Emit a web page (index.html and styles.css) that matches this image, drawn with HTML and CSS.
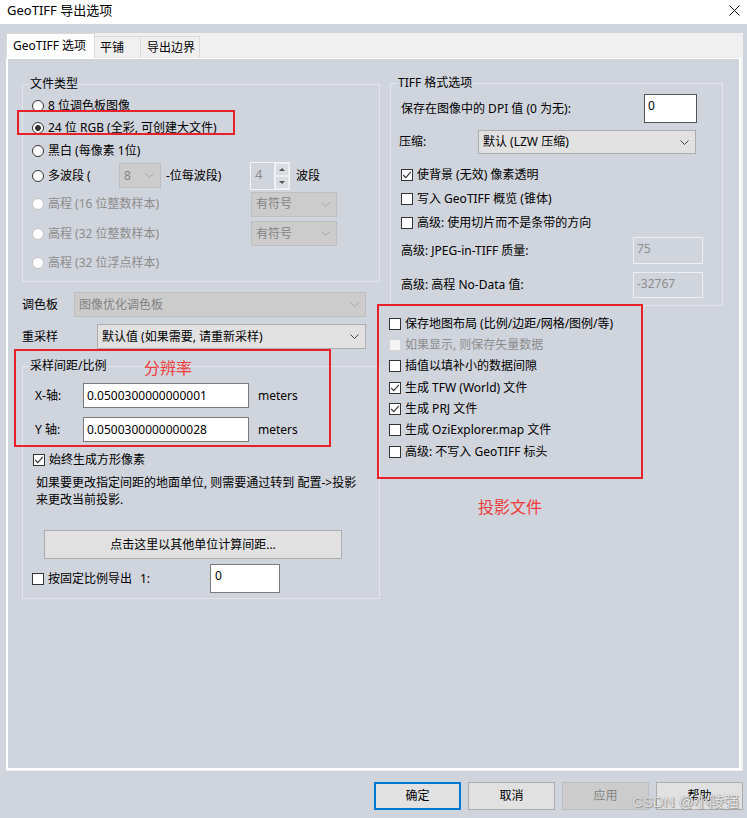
FILE: index.html
```html
<!DOCTYPE html>
<html lang="zh-CN">
  <head>
    <meta charset="UTF-8">
    <title>GeoTIFF 导出选项</title>
    <link rel="stylesheet" href="styles.css">
  </head>
  <body>

    <div class="titlebar">
      <span class="title">GeoTIFF 导出选项</span>
      <svg class="close" width="11" height="11" viewBox="0 0 11 11"><path d="M0.5 0.5L10.5 10.5M10.5 0.5L0.5 10.5" stroke="#111" stroke-width="1"/></svg>
    </div>

    <div class="dialog">
      <div class="tabctl">
        <div class="tabstrip">
          <div class="tab active">GeoTIFF 选项</div>
          <div class="tab t-tile">平铺</div>
          <div class="tab t-bound">导出边界</div>
        </div>

        <div class="page">
          <!-- left column -->
          <div class="col-left">
            <div class="group g-type">
              <div class="group-title">文件类型</div>
              <div class="opt h22"><span class="rb"></span>8 位调色板图像</div>
              <div class="opt h22"><span class="rb on"></span>24 位 RGB (全彩, 可创建大文件)</div>
              <div class="opt h23"><span class="rb"></span>黑白 (每像素 1位)</div>
              <div class="opt h27">
                <span class="opt-lbl w87"><span class="rb"></span>多波段 (</span>
                <div class="combo dis c-bits"><span>8</span><svg class="chev" width="9" height="5" viewBox="0 0 9 5"><path d="M0.5 0.5L4.5 4.5L8.5 0.5" fill="none" stroke="currentColor"/></svg></div>
                <span class="mb-text">-位每波段)</span>
                <div class="spin">
                  <div class="spin-edit">4</div>
                  <div class="spin-btns">
                    <div class="sb"><span class="tri-up"></span></div>
                    <div class="sb"><span class="tri-down"></span></div>
                  </div>
                </div>
                <span class="mb-end">波段</span>
              </div>
              <div class="opt h30 dis">
                <span class="opt-lbl w219"><span class="rb"></span>高程 (16 位整数样本)</span>
                <div class="combo dis c-sign"><span>有符号</span><svg class="chev" width="9" height="5" viewBox="0 0 9 5"><path d="M0.5 0.5L4.5 4.5L8.5 0.5" fill="none" stroke="currentColor"/></svg></div>
              </div>
              <div class="opt h29 dis">
                <span class="opt-lbl w219"><span class="rb"></span>高程 (32 位整数样本)</span>
                <div class="combo dis c-sign"><span>有符号</span><svg class="chev" width="9" height="5" viewBox="0 0 9 5"><path d="M0.5 0.5L4.5 4.5L8.5 0.5" fill="none" stroke="currentColor"/></svg></div>
              </div>
              <div class="opt h30 dis"><span class="rb"></span>高程 (32 位浮点样本)</div>
            </div>

            <div class="sel-row r-pal">
              <span>调色板</span>
              <div class="combo dis c-pal"><span>图像优化调色板</span><svg class="chev" width="9" height="5" viewBox="0 0 9 5"><path d="M0.5 0.5L4.5 4.5L8.5 0.5" fill="none" stroke="currentColor"/></svg></div>
            </div>
            <div class="sel-row r-res">
              <span>重采样</span>
              <div class="combo c-res"><span>默认值 (如果需要, 请重新采样)</span><svg class="chev" width="9" height="5" viewBox="0 0 9 5"><path d="M0.5 0.5L4.5 4.5L8.5 0.5" fill="none" stroke="currentColor"/></svg></div>
            </div>

            <div class="group g-spacing">
              <div class="group-title">采样间距/比例</div>
              <div class="axis-row">
                <span class="axis-lbl">X-轴:</span>
                <div class="edit e-axis">0.0500300000000001</div>
                <span class="unit">meters</span>
              </div>
              <div class="axis-row">
                <span class="axis-lbl">Y 轴:</span>
                <div class="edit e-axis">0.0500300000000028</div>
                <span class="unit">meters</span>
              </div>
              <div class="crow sq"><span class="cb on"><svg width="10" height="10" viewBox="0 0 10 10"><path d="M1.2 5L3.8 7.6L8.8 1.8" fill="none" stroke="#333" stroke-width="1.1"/></svg></span>始终生成方形像素</div>
              <p class="hint">如果要更改指定间距的地面单位, 则需要通过转到 配置-&gt;投影<br>来更改当前投影.</p>
              <div class="btn wide">点击这里以其他单位计算间距...</div>
              <div class="crow fixed">
                <span class="cb"></span>
                <span class="fx-lbl">按固定比例导出</span>
                <span class="fx-one">1:</span>
                <div class="edit e-scale">0</div>
              </div>
            </div>
          </div>

          <!-- right column -->
          <div class="col-right">
            <div class="group g-tiff">
              <div class="group-title">TIFF 格式选项</div>
              <div class="frow r-dpi">
                <span>保存在图像中的 DPI 值 (0 为无):</span>
                <div class="edit e-dpi">0</div>
              </div>
              <div class="frow r-comp">
                <span class="comp-lbl">压缩:</span>
                <div class="combo c-comp"><span>默认 (LZW 压缩)</span><svg class="chev" width="9" height="5" viewBox="0 0 9 5"><path d="M0.5 0.5L4.5 4.5L8.5 0.5" fill="none" stroke="currentColor"/></svg></div>
              </div>
              <div class="crow h24 first"><span class="cb on"><svg width="10" height="10" viewBox="0 0 10 10"><path d="M1.2 5L3.8 7.6L8.8 1.8" fill="none" stroke="#333" stroke-width="1.1"/></svg></span>使背景 (无效) 像素透明</div>
              <div class="crow h24"><span class="cb"></span>写入 GeoTIFF 概览 (锥体)</div>
              <div class="crow h24"><span class="cb"></span>高级: 使用切片而不是条带的方向</div>
              <div class="frow r-jpeg">
                <span>高级: JPEG-in-TIFF 质量:</span>
                <div class="edit dis e-q">75</div>
              </div>
              <div class="frow r-nd">
                <span>高级: 高程 No-Data 值:</span>
                <div class="edit dis e-q">-32767</div>
              </div>
            </div>

            <div class="checks">
              <div class="crow h21"><span class="cb"></span>保存地图布局 (比例/边距/网格/图例/等)</div>
              <div class="crow h21 dis"><span class="cb"></span>如果显示, 则保存矢量数据</div>
              <div class="crow h21"><span class="cb"></span>插值以填补小的数据间隙</div>
              <div class="crow h21"><span class="cb on"><svg width="10" height="10" viewBox="0 0 10 10"><path d="M1.2 5L3.8 7.6L8.8 1.8" fill="none" stroke="#333" stroke-width="1.1"/></svg></span>生成 TFW (World) 文件</div>
              <div class="crow h21"><span class="cb on"><svg width="10" height="10" viewBox="0 0 10 10"><path d="M1.2 5L3.8 7.6L8.8 1.8" fill="none" stroke="#333" stroke-width="1.1"/></svg></span>生成 PRJ 文件</div>
              <div class="crow h21"><span class="cb"></span>生成 OziExplorer.map 文件</div>
              <div class="crow h21"><span class="cb"></span>高级: 不写入 GeoTIFF 标头</div>
            </div>
          </div>
        </div>
      </div>

      <div class="btnrow">
        <div class="btn default">确定</div>
        <div class="btn">取消</div>
        <div class="btn dis">应用</div>
        <div class="btn">帮助</div>
      </div>
    </div>

    <!-- annotations drawn over the dialog -->
    <div class="mark m-rgb"></div>
    <div class="mark m-res"></div>
    <div class="mark m-prj"></div>
    <div class="note n-res">分辨率</div>
    <div class="note n-prj">投影文件</div>
    <div class="wm">CSDN @小陵强</div>

  </body>
</html>
```

FILE: styles.css
```css
* { box-sizing: border-box; }

body {
  margin: 0;
  width: 747px;
  height: 818px;
  position: relative;
  overflow: hidden;
  background: #d0d4dc;
  font-family: "Noto Sans", "Noto Sans CJK SC", sans-serif;
  font-size: 12px;
  line-height: 16px;
  color: #000;
}

/* TITLE BAR */
.titlebar {
  height: 24px;
  background: #fff;
  display: flex;
  align-items: center;
  justify-content: space-between;
  padding: 0 7px 4px 7px;
}

.title { font-size: 13px; }

.dialog { padding: 9px 4px 0 6px; }

/* TABS */
.tabctl {
  background: #f0f0f0;
  padding: 0 2px 1px 0;
}

.tabstrip {
  display: flex;
  align-items: flex-end;
  height: 25px;
}

.tab {
  height: 22px;
  line-height: 21px;
  padding-left: 5px;
  background: #f0f0f0;
  border: 1px solid #d9d9d9;
  border-left: 0;
  border-bottom: 0;
}

.tab.active {
  width: 89px;
  height: 25px;
  line-height: 23px;
  padding-left: 6px;
  background: #fff;
  border-left: 1px solid #d9d9d9;
}

.t-tile { width: 46px; }
.t-bound { width: 59px; padding-left: 6px; }

.page {
  height: 712px;
  display: flex;
  padding-left: 14px;
  background: #d0d4dc;
  border: 2px solid #fff;
  border-top-width: 1px;
}

/* GROUP BOXES */
.group {
  border: 1px solid #e3e5ea;
  padding: 0 0 3px 9px;
}

.group-title {
  display: table;
  margin: -9px 0 3px -3px;
  padding: 0 1px;
  line-height: 16px;
  background: #d0d4dc;
}

.col-left {
  width: 358px;
  padding-top: 25px;
}

.col-right {
  flex: 1;
  padding-top: 24px;
}

/* RADIO / CHECK */
.rb {
  width: 12px;
  height: 12px;
  flex: none;
  margin-right: 4px;
  border: 1px solid #333;
  border-radius: 50%;
  background: #fff;
}

.rb.on { background: radial-gradient(circle, #333 0 2.6px, #fff 3.2px); }

.dis .rb { border-color: #c4c4c4; }

.cb {
  width: 12px;
  height: 12px;
  flex: none;
  margin-right: 4px;
  border: 1px solid #333;
  background: #fff;
  display: flex;
  align-items: center;
  justify-content: center;
}

.dis .cb { border-color: #d6d6d6; background: #f4f4f4; }

.opt, .crow {
  display: flex;
  align-items: center;
}

.opt.dis > .opt-lbl, .opt.dis, .crow.dis { color: #8d8d8d; }

.opt-lbl {
  display: flex;
  align-items: center;
  flex: none;
}

.h21 { height: 21.33px; }
.h22 { height: 22px; }
.h23 { height: 23px; }
.h24 { height: 24px; }
.h27 { height: 27px; }
.h29 { height: 29px; }
.h30 { height: 30px; }

.w87 { width: 87px; }
.w219 { width: 219px; }

/* COMBOS */
.combo {
  display: flex;
  align-items: center;
  justify-content: space-between;
  height: 25px;
  padding: 0 6px 0 4px;
  background: #e1e1e1;
  border: 1px solid #adadad;
  color: #000;
  white-space: nowrap;
}

.combo .chev { color: #444; flex: none; }

.combo.dis {
  background: #cccccc;
  border-color: #bfbfbf;
  color: #838383;
}

.combo.dis .chev { color: #a6a6a6; }

.c-bits { width: 42px; }
.c-sign { width: 86px; }
.c-pal { width: 292px; }
.c-res { width: 269px; }
.c-comp { width: 218px; height: 24px; margin-right: 24px; }

.mb-text {
  width: 89px;
  padding-left: 5px;
}

.spin {
  display: flex;
  height: 28px;
}

.spin-edit {
  width: 24px;
  padding: 3px 0 0 4px;
  font-size: 13px;
  color: #8d8d8d;
  border: 1px solid #f2f3f5;
  border-right: 0;
}

.spin-btns {
  width: 16px;
  display: flex;
  flex-direction: column;
  border: 1px solid #f2f3f5;
}

.sb {
  flex: 1;
  display: flex;
  align-items: center;
  justify-content: center;
  background: #d9dce1;
  border: 1px solid #eceef1;
}

.tri-up {
  border: 3px solid transparent;
  border-top: 0;
  border-bottom: 3px solid #555;
}

.tri-down {
  border: 3px solid transparent;
  border-bottom: 0;
  border-top: 3px solid #555;
}

.mb-end { margin-left: 6px; }

.sel-row {
  width: 344px;
  height: 25px;
  display: flex;
  align-items: center;
  justify-content: space-between;
}

.r-pal { margin-top: 10px; }
.r-res { margin-top: 7px; }

/* EDITS */
.edit {
  background: #fff;
  border: 1px solid #7a7a7a;
  white-space: nowrap;
}

.edit.dis {
  background: #d0d4dc;
  border-color: #eceef1;
  color: #8d8d8d;
}

/* SPACING GROUP */
.g-spacing {
  margin-top: 17px;
  padding-bottom: 5px;
}

.g-spacing .group-title { margin-bottom: 0; }

.axis-row {
  display: flex;
  align-items: center;
  height: 25px;
  margin-top: 9px;
}

.axis-lbl {
  width: 51px;
  padding-left: 3px;
}

.e-axis {
  width: 166px;
  height: 25px;
  padding-left: 3px;
  line-height: 23px;
}

.unit { margin-left: 9px; }

.crow.sq {
  height: 18px;
  margin-top: 9px;
  padding-left: 1px;
}

.hint {
  margin: 5px 0 0 4px;
  line-height: 17px;
  white-space: nowrap;
}

.btn {
  height: 28px;
  width: 87px;
  display: flex;
  align-items: center;
  justify-content: center;
  background: #e1e1e1;
  border: 1px solid #adadad;
}

.btn.wide {
  width: 298px;
  height: 29px;
  margin: 22px 0 0 12px;
}

.crow.fixed {
  height: 29px;
  margin-top: 5px;
}

.fx-lbl { width: 92px; }
.fx-one { width: 70px; }

.e-scale {
  width: 70px;
  height: 29px;
  padding: 3px 0 0 4px;
}

/* TIFF GROUP */
.g-tiff {
  width: 333px;
  margin-left: 10px;
  padding: 0 0 7px 10px;
}

.g-tiff .group-title { margin-left: -4px; }

.frow {
  display: flex;
  align-items: center;
  justify-content: space-between;
}

.r-dpi { height: 29px; }
.r-comp { height: 24px; margin-top: 7px; justify-content: flex-start; }
.comp-lbl { width: 79px; margin-left: -2px; }

.e-dpi {
  width: 53px;
  height: 29px;
  margin-right: 25px;
  padding: 3px 0 0 3px;
  border-color: #555;
}

.crow.first { margin-top: 9px; }

.r-jpeg { height: 27px; margin-top: 2px; }
.r-nd { height: 26px; margin-top: 8px; }

.e-q {
  width: 70px;
  height: 100%;
  margin-right: 19px;
  padding: 3px 0 0 3px;
}

.checks {
  margin-top: 7px;
  padding-left: 9px;
}

/* BUTTONS */
.btnrow {
  display: flex;
  justify-content: flex-end;
  gap: 7px;
  margin-top: 11px;
}

.btn.default { border: 2px solid #0078d7; }

.btn.dis {
  background: #cccccc;
  border-color: #bfbfbf;
  color: #838383;
}

/* ANNOTATIONS */
.mark {
  position: absolute;
  border: 2px solid #e8202a;
}

.m-rgb { left: 17px; top: 110px; width: 218px; height: 25px; }
.m-res { left: 14px; top: 349px; width: 317px; height: 98px; }
.m-prj { left: 377px; top: 304px; width: 266px; height: 175px; }

.note {
  position: absolute;
  color: #ee3b3b;
  font-family: "Noto Sans CJK SC", sans-serif;
  font-size: 16px;
  line-height: 20px;
}

.n-res { left: 144px; top: 357px; }
.n-prj { left: 478px; top: 496px; }

.wm {
  position: absolute;
  left: 632px;
  top: 792px;
  font-family: "Liberation Sans", "Noto Sans CJK SC", sans-serif;
  font-size: 15px;
  line-height: 20px;
  color: rgba(255, 255, 255, 0.8);
  text-shadow: 0 0 1px #777, 1px 1px 1px #999;
}
```
